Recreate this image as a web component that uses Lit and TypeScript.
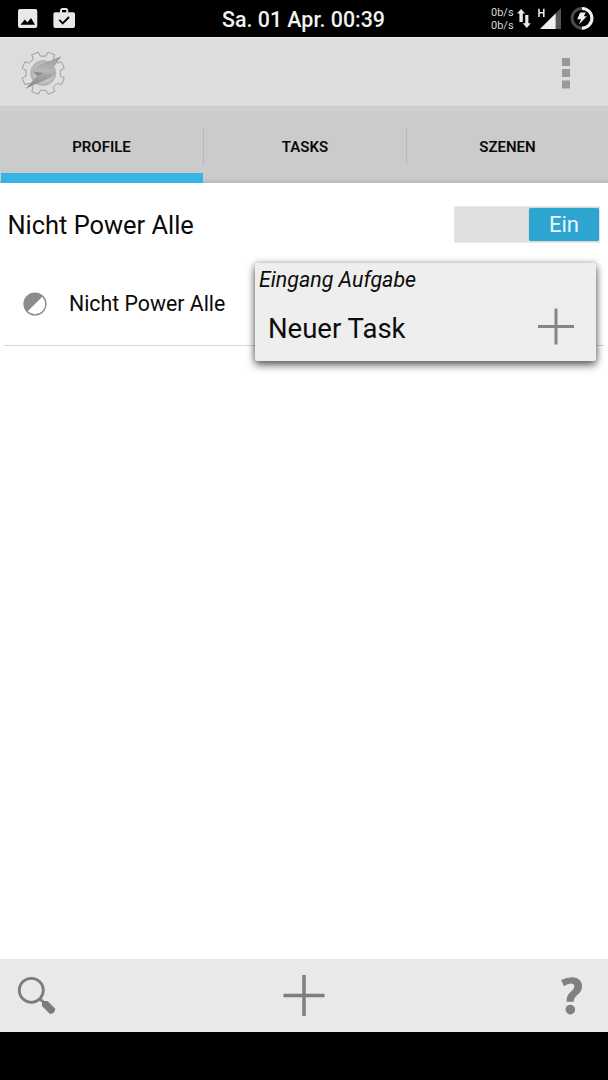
import { LitElement, html, css } from "lit";
import { customElement, property } from "lit/decorators.js";

const gearPath = (() => {
  const cx = 43.2, cy = 36.2;
  const pts: string[] = [];
  for (let i = 0; i < 8; i++) {
    const mid = 22.5 + i * 45;
    for (const [off, r] of [[-13, 17.3], [-9.5, 21.6], [9.5, 21.6], [13, 17.3]]) {
      const a = ((mid + off) * Math.PI) / 180;
      pts.push(`${(cx + r * Math.cos(a)).toFixed(2)} ${(cy + r * Math.sin(a)).toFixed(2)}`);
    }
  }
  return `M${pts.join("L")}Z`;
})();

@customElement("status-bar")
class StatusBar extends LitElement {
  static styles = css`
    :host { display: grid; grid-template-columns: 222px 1fr 118px; height: 37px; background: #000; color: #f2f2f2; }
    svg { display: block; }
    .clock { font-size: 21.4px; font-weight: 500; line-height: 39px; white-space: nowrap; }
    .right { display: flex; }
    .rates { width: 24px; font-size: 11px; line-height: 12.5px; padding: 7px 0 0 1px; white-space: nowrap; color: #d8d8d8; }
  `;
  render() {
    return html`
      <svg width="100" height="37" viewBox="0 0 100 37">
        <rect x="18" y="9" width="19.3" height="19" rx="2" fill="#e8e8e8" />
        <path d="M20.5 24.8L24.8 19.4L27.4 22.4L31 18L35 24.8Z" fill="#000" />
        <path d="M55 12.2H60V10.2Q60.5 8 62.5 8H66Q68 8 68.2 10.2V12.2H73.2Q75 12.3 75 14V26Q75 28 73 28H55.2Q53.4 28 53.4 26V14Q53.4 12.2 55 12.2ZM62 12.2H66.2V10H62Z" fill="#e8e8e8" fill-rule="evenodd" />
        <path d="M59.3 19.8L62.7 23.3L69 17" fill="none" stroke="#000" stroke-width="1.9" />
      </svg>
      <div class="clock">Sa. 01 Apr. 00:39</div>
      <div class="right">
        <div class="rates"><div>0b/s</div><div>0b/s</div></div>
        <svg width="93" height="37" viewBox="515 0 93 37">
          <path d="M519.4 22V13.5H517L521.1 9L525.2 13.5H522.8V22ZM525.2 15H528.4V23.2H530.8L526.8 28L522.8 23.2H525.2Z" fill="#e8e8e8" />
          <path d="M539 8.8V17M543.8 8.8V17M539 12.8H543.8" stroke="#e8e8e8" stroke-width="1.6" />
          <path d="M561 8V29H540Z" fill="#555" />
          <path d="M555.6 13.4V29H540Z" fill="#f0f0f0" />
          <circle cx="582" cy="18.3" r="9.9" fill="none" stroke="#4a4a4a" stroke-width="3" />
          <path d="M582 8.4A9.9 9.9 0 0 1 582 28.2" fill="none" stroke="#f0f0f0" stroke-width="3" />
          <path d="M580.2 12.5H585.8L583.8 16.3H586.8L579 24.5L581 19.2H577.2Z" fill="#f0f0f0" />
        </svg>
      </div>
    `;
  }
}

@customElement("app-bar")
class AppBar extends LitElement {
  static styles = css`
    :host { display: flex; justify-content: space-between; box-sizing: border-box; height: 69px; background: #ddd; border-top: 1px solid #efefef; }
    svg { display: block; }
  `;
  render() {
    return html`
      <svg width="90" height="68" viewBox="0 1 90 68">
        <defs>
          <linearGradient id="bolt" x1="0" y1="0" x2="0" y2="1">
            <stop offset="0" stop-color="#999" /><stop offset="0.45" stop-color="#b8b8b8" />
            <stop offset="0.6" stop-color="#a4a4a4" /><stop offset="1" stop-color="#858585" />
          </linearGradient>
        </defs>
        <path d=${gearPath} fill="#dfdfdf" stroke="#959595" stroke-width="0.9" />
        <circle cx="43.2" cy="36" r="11.2" fill="#dadada" stroke="#b8b8b8" stroke-width="2.8" />
        <circle cx="43.2" cy="36" r="12.6" fill="none" stroke="#a0a0a0" stroke-width="0.5" />
        <circle cx="43.2" cy="36" r="9" fill="none" stroke="#a6a6a6" stroke-width="0.6" />
        <path d="M61 19.6L51.2 33.2L55.5 35.2Q50 42.5 41 44.6L26 51.3L37 39.2L33.3 35Q34.5 30 41 27.8Z" fill="url(#bolt)" stroke="#989898" stroke-width="0.4" />
        <path d="M33.5 34.8L44 36L37.5 38.8Z" fill="#8c8c8c" />
      </svg>
      <svg width="60" height="68" viewBox="548 1 60 68">
        <g fill="#999">
          <rect x="562" y="21" width="8" height="8" />
          <rect x="562" y="32" width="8" height="8" />
          <rect x="562" y="43.5" width="8" height="8" />
        </g>
      </svg>
    `;
  }
}

@customElement("tab-strip")
class TabStrip extends LitElement {
  @property({ type: Array }) tabs: string[] = [];
  @property({ type: Number }) active = 0;
  static styles = css`
    :host { display: grid; grid-template-columns: 203px 203px 1fr; height: 77px; background: linear-gradient(#c9c9c9 1px, #cfcfcf 1px, #cfcfcf 5px, #cbcbcb 5px, #cbcbcb 73px, #bdbdbd 75px); }
    .tab { display: grid; grid-template-rows: 22px 37px 8px 10px; text-align: center; }
    .label { grid-row: 2; font-size: 15px; font-weight: 600; line-height: 39px; height: 37px; color: #0a0a0a; }
    .tab + .tab .label { border-left: 1px solid #b8b8b8; }
    .bar { grid-row: 4; margin-left: 1px; background: #35b5e5; }
  `;
  render() {
    return this.tabs.map(
      (t, i) => html`<div class="tab"><div class="label">${t}</div>${i === this.active ? html`<div class="bar"></div>` : ""}</div>`
    );
  }
}

@customElement("task-popup")
class TaskPopup extends LitElement {
  static styles = css`
    :host { display: block; box-sizing: border-box; width: 341px; height: 98px; background: #eee; border-radius: 2px; box-shadow: 0 4px 8px rgba(0,0,0,.6), 0 0 6px rgba(0,0,0,.25); color: #0c0c0c; }
    .title { font-size: 21.4px; font-style: italic; line-height: 24px; padding: 5px 0 0 4px; }
    .row { display: flex; justify-content: space-between; align-items: center; height: 70px; padding: 0 20px 0 13px; box-sizing: border-box; }
    .name { font-size: 27.5px; line-height: 32px; padding-top: 3px; }
    svg { display: block; }
  `;
  render() {
    return html`
      <div class="title">Eingang Aufgabe</div>
      <div class="row">
        <div class="name">Neuer Task</div>
        <svg width="40" height="40" viewBox="0 0 40 40"><path d="M2 19.5H38M20 1.5V37.5" stroke="#858585" stroke-width="3" /></svg>
      </div>
    `;
  }
}

@customElement("app-root")
class AppRoot extends LitElement {
  static styles = css`
    :host { display: flex; flex-direction: column; width: 608px; height: 1080px; overflow: hidden; background: #000; font-family: Roboto, sans-serif; color: #0a0a0a; }
    svg { display: block; }
    .content { flex: 1; background: #fff; position: relative; }
    .profile { display: flex; align-items: center; justify-content: space-between; height: 82px; padding: 0 8px 0 7.5px; box-sizing: border-box; }
    .profile-name { font-size: 25.4px; padding-top: 2px; }
    .switch { display: flex; justify-content: flex-end; box-sizing: border-box; width: 146px; height: 37px; background: #dfdfdf; border: 1px solid #e8e8e8; padding: 1px 0; }
    .thumb { width: 70px; height: 33px; border-radius: 2px; background: #2da5d1; color: #eef6fa; font-size: 22px; line-height: 34px; text-align: center; box-shadow: 0 0 1px #999; }
    .context { display: flex; align-items: center; height: 77px; padding-bottom: 3px; margin: 0 4px; border-bottom: 1px solid #d8d8d8; font-size: 21.3px; }
    .context svg { margin: 0 21px 0 18px; }
    .popup { position: absolute; left: 255px; top: 80px; }
    .bottom { display: flex; justify-content: space-between; height: 73px; background: #e9e9e9; margin-bottom: 48px; }
  `;
  render() {
    return html`
      <status-bar></status-bar>
      <app-bar></app-bar>
      <tab-strip .tabs=${["PROFILE", "TASKS", "SZENEN"]} .active=${0}></tab-strip>
      <div class="content">
        <div class="profile">
          <div class="profile-name">Nicht Power Alle</div>
          <div class="switch"><div class="thumb">Ein</div></div>
        </div>
        <div class="context">
          <svg width="26" height="26" viewBox="0 0 26 26">
            <circle cx="13" cy="13" r="10.9" fill="#fff" stroke="#8c8c8c" stroke-width="1.4" />
            <path d="M5.2 20.8A11 11 0 0 1 20.8 5.2Z" fill="#8c8c8c" />
          </svg>
          <span>Nicht Power Alle</span>
        </div>
        <task-popup class="popup"></task-popup>
      </div>
      <div class="bottom">
        <svg width="80" height="73" viewBox="0 959 80 73">
          <circle cx="31.3" cy="990.3" r="12" fill="none" stroke="#7c7c7c" stroke-width="2.8" />
          <path d="M39.2 998.5L44 1002.5" stroke="#7c7c7c" stroke-width="2.8" />
          <path d="M42 1003.3Q42 1001 44.5 1001H47.5L54.8 1008.3Q55.8 1010.3 54 1012.2Q52 1014.3 49.7 1013.8L42 1006Z" fill="#7c7c7c" />
        </svg>
        <svg width="80" height="73" viewBox="264 959 80 73">
          <path d="M283.5 995.5H324.5M304 975V1016" stroke="#7e7e7e" stroke-width="3.5" />
        </svg>
        <svg width="80" height="73" viewBox="528 959 80 73">
          <path d="M561.2 980Q566.5 977.2 572.5 977.2Q582 978 582 986.3Q582 991.5 577.2 995Q573.8 997.6 573.7 1001.8H566.6Q566.2 995.5 570.4 992Q574.3 989 574.3 986.4Q574 983.6 571 983.6Q567.8 983.6 564 986.3Z" fill="#808080" />
          <circle cx="570.3" cy="1009.6" r="4.8" fill="#808080" />
        </svg>
      </div>
    `;
  }
}
